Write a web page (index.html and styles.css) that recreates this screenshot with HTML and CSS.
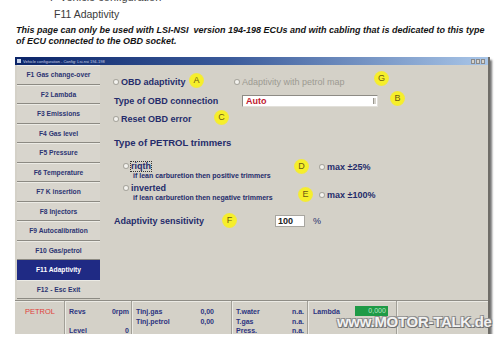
FILE: index.html
```html
<!DOCTYPE html>
<html lang="en">
<head>
    <meta charset="UTF-8">
    <meta name="viewport" content="width=device-width, initial-scale=1.0">
    <title>F11 Adaptivity</title>
    <link rel="stylesheet" href="styles.css">
</head>
<body>
    <div class="doc">
        <!-- Manual heading -->
        <p class="crumb">&bull;&nbsp; F Vehicle configuration</p>
        <p class="page-title">F11 Adaptivity</p>
        <p class="note">This page can only be used with LSI-NSI&nbsp; version 194-198 ECUs and with cabling that is dedicated to this type<br>of ECU connected to the OBD socket.</p>

        <!-- Screenshot of the configuration window -->
        <div class="window">
            <div class="titlebar">
                <span class="app-icon"></span>
                <span class="title-text">Vehicle configuration - Config: Lsi-nsi 194-198</span>
                <span class="win-btns"><i></i><i></i><i></i></span>
            </div>

            <div class="client">
                <ul class="menu">
                    <li>F1 Gas change-over</li>
                    <li>F2 Lambda</li>
                    <li>F3 Emissions</li>
                    <li>F4 Gas level</li>
                    <li>F5 Pressure</li>
                    <li>F6 Temperature</li>
                    <li>F7 K insertion</li>
                    <li>F8 Injectors</li>
                    <li>F9 Autocalibration</li>
                    <li>F10 Gas/petrol</li>
                    <li class="active">F11 Adaptivity</li>
                    <li>F12 - Esc Exit</li>
                </ul>

                <div class="panel">
                    <div class="row row-first">
                        <label class="option col-a"><span class="radio"></span>OBD adaptivity</label>
                        <label class="option disabled"><span class="radio"></span>Adaptivity with petrol map</label>
                    </div>
                    <div class="row row-select">
                        <span class="field-label col-a">Type of OBD connection</span>
                        <div class="select">Auto<span class="spin"></span></div>
                    </div>
                    <div class="row row-reset">
                        <label class="option"><span class="radio"></span>Reset OBD error</label>
                    </div>

                    <h3 class="section">Type of PETROL trimmers</h3>

                    <div class="trimmers">
                        <div class="trim-type">
                            <label class="option"><span class="radio"></span><span class="focus">riqth</span></label>
                            <p class="hint">if lean carburetion then positive trimmers</p>
                            <label class="option opt-inverted"><span class="radio"></span>inverted</label>
                            <p class="hint">if lean carburetion then negative trimmers</p>
                        </div>
                        <div class="trim-max">
                            <label class="option"><span class="radio"></span>max &plusmn;25%</label>
                            <label class="option opt-max100"><span class="radio"></span>max &plusmn;100%</label>
                        </div>
                    </div>

                    <div class="row row-sens">
                        <span class="field-label sens-label">Adaptivity sensitivity</span>
                        <span class="num-input">100</span>
                        <span class="unit">%</span>
                    </div>

                    <!-- Annotation markers -->
                    <span class="marker m-a">A</span>
                    <span class="marker m-g">G</span>
                    <span class="marker m-b">B</span>
                    <span class="marker m-c">C</span>
                    <span class="marker m-d">D</span>
                    <span class="marker m-e">E</span>
                    <span class="marker m-f">F</span>
                </div>
            </div>

            <div class="status">
                <div class="cell cell-fuel">PETROL</div>
                <div class="cell cell-revs">
                    <span>Revs</span><span class="val">0rpm</span>
                    <span>&nbsp;</span><span>&nbsp;</span>
                    <span>Level</span><span class="val">0</span>
                </div>
                <div class="cell cell-tinj">
                    <span>Tinj.gas</span><span class="val">0,00</span>
                    <span>Tinj.petrol</span><span class="val">0,00</span>
                </div>
                <div class="cell cell-temp">
                    <span>T.water</span><span class="val">n.a.</span>
                    <span>T.gas</span><span class="val">n.a.</span>
                    <span>Press.</span><span class="val">n.a.</span>
                </div>
                <div class="cell cell-lambda">
                    <span>Lambda</span><span class="lambda-bar">0,000</span>
                </div>
                <div class="cell cell-rest"></div>
            </div>
        </div>

        <div class="watermark">www.MOTOR-TALK.de</div>
    </div>
</body>
</html>
```

FILE: styles.css
```css
/* Colours of the scanned window */
:root {
    --win-bg: #d4d1c8;
    --btn-bg: #d8d5cd;
    --line-dark: #8c8a83;
    --line-light: #ecebe5;
    --navy: #252c6b;
    --menu-active: #1f2a84;
}

body {
    margin: 0;
    background: #ffffff;
    font-family: "Liberation Sans", Arial, sans-serif;
    overflow: hidden;
}

p, h3, ul {
    margin: 0;
    padding: 0;
}

.doc {
    position: relative;
    height: 343px;
}

/* Manual text above the screenshot (first line is cut by the scan) */
.crumb {
    margin-top: -9px;
    padding-left: 40px;
    font-size: 11px;
    line-height: 12px;
    color: #444;
}

.page-title {
    margin-top: 5px;
    padding-left: 54px;
    font-size: 10.5px;
    line-height: 12px;
    color: #3a3a3a;
}

.note {
    margin-top: 5px;
    padding-left: 16px;
    font-size: 9px;
    line-height: 11px;
    font-weight: bold;
    font-style: italic;
    color: #141414;
    white-space: nowrap;
}

/* Window */
.window {
    margin: 10px 0 0 15px;
    width: 473px;
    background: var(--win-bg);
    border-right: 2px solid #6f6d68;
    box-shadow: 2px 3px 2px rgba(0, 0, 0, 0.55);
}

.titlebar {
    height: 8px;
    display: flex;
    align-items: center;
    gap: 2px;
    padding: 0 3px 0 2px;
    background: linear-gradient(to right, #0b2468 0%, #3a5a9a 45%, #a9c6e8 100%);
}

.app-icon {
    width: 4px;
    height: 4px;
    background: #c8d4ea;
}

.title-text {
    font-size: 4px;
    color: #c9d3e8;
    white-space: nowrap;
}

.win-btns {
    margin-left: auto;
    display: flex;
    gap: 1px;
}

.win-btns i {
    width: 4px;
    height: 5px;
    background: #d6d3cc;
    border: 1px solid #8a8a8a;
    box-sizing: border-box;
}

.client {
    display: flex;
    height: 235px;
}

/* Function key menu */
.menu {
    list-style: none;
    width: 83px;
    padding-left: 2px;
}

.menu li {
    height: 19.5px;
    box-sizing: border-box;
    display: flex;
    align-items: center;
    justify-content: center;
    background: var(--btn-bg);
    border-top: 1px solid var(--line-light);
    border-bottom: 1px solid var(--line-dark);
    font-size: 6.7px;
    font-weight: bold;
    color: #2c3472;
    white-space: nowrap;
}

.menu li.active {
    background: var(--menu-active);
    border-color: var(--menu-active);
    color: #ffffff;
}

/* Main panel */
.panel {
    position: relative;
    flex: 1;
    padding: 11px 0 0 14px;
    color: var(--navy);
    font-size: 9px;
    font-weight: bold;
}

.row {
    display: flex;
    align-items: center;
    height: 12px;
}

.col-a {
    width: 121px;
}

.option {
    display: flex;
    align-items: center;
    height: 12px;
    white-space: nowrap;
}

.radio {
    width: 4px;
    height: 4px;
    margin-right: 3px;
    border-radius: 50%;
    background: #f4f3ef;
    box-shadow: 0 0 0 1px #a9a79f;
}

.disabled {
    color: #9c9a92;
    font-weight: normal;
}

.row-select {
    margin-top: 7px;
}

.row-select .col-a {
    width: 128px;
}

.select {
    position: relative;
    width: 136px;
    height: 12px;
    box-sizing: border-box;
    padding-left: 3px;
    line-height: 11px;
    background: #ffffff;
    border: 1px solid #8d8b85;
    border-right-color: #e2e0da;
    border-bottom-color: #e2e0da;
    color: #c0182e;
}

.spin {
    position: absolute;
    right: 1px;
    top: 2px;
    width: 2px;
    height: 6px;
    border-left: 1px solid #9a9890;
    background: #d6d3cc;
}

.row-reset {
    margin-top: 6px;
}

.section {
    margin-top: 12px;
    font-size: 9.5px;
    line-height: 12px;
}

/* Trimmer options in two columns */
.trimmers {
    display: flex;
    margin-top: 11px;
    padding-left: 10px;
}

.trim-type {
    width: 196px;
}

.hint {
    padding-left: 9px;
    font-size: 7px;
    line-height: 8px;
    white-space: nowrap;
}

.opt-inverted {
    margin-top: 2px;
}

.focus {
    outline: 1px dotted #333;
    outline-offset: 0;
    line-height: 9px;
}

.trim-max {
    padding-top: 1px;
}

.opt-max100 {
    margin-top: 16px;
}

.row-sens {
    margin-top: 13px;
}

.sens-label {
    width: 161px;
}

.num-input {
    width: 30px;
    height: 12px;
    box-sizing: border-box;
    padding-left: 2px;
    line-height: 11px;
    background: #ffffff;
    border: 1px solid #a8a6a0;
    color: #222;
}

.unit {
    margin-left: 8px;
    font-weight: normal;
}

/* Yellow annotation markers */
.marker {
    position: absolute;
    width: 15px;
    height: 15px;
    border-radius: 50%;
    background: radial-gradient(circle, #f6ef2a 55%, #efe64a 72%, rgba(240, 232, 90, 0) 100%);
    color: #6b5a12;
    font-size: 9px;
    font-weight: normal;
    line-height: 15px;
    text-align: center;
}

.m-a { left: 89px; top: 8px; }
.m-g { left: 274px; top: 6px; }
.m-b { left: 290px; top: 26px; }
.m-c { left: 114px; top: 45px; }
.m-d { left: 194px; top: 94px; }
.m-e { left: 198px; top: 122px; }
.m-f { left: 122px; top: 148px; }

/* Status bar */
.status {
    display: flex;
    height: 35px;
    border-top: 1px solid #8f8d86;
    box-shadow: inset 0 1px 0 var(--line-light);
    font-size: 7px;
    font-weight: bold;
    color: #2c3480;
}

.cell {
    box-sizing: border-box;
    padding-top: 6px;
    border-right: 1px solid #a19f97;
    box-shadow: 1px 0 0 var(--line-light);
    line-height: 9.5px;
}

.cell-fuel {
    width: 50px;
    padding-left: 10px;
    color: #e0403a;
    font-weight: normal;
    font-size: 7.5px;
}

.cell-revs,
.cell-tinj,
.cell-temp {
    display: grid;
    grid-template-columns: 1fr auto;
    align-content: start;
}

.cell-revs {
    width: 67px;
    padding: 6px 2px 0 4px;
}

.cell-tinj {
    width: 100px;
    padding: 6px 17px 0 4px;
}

.cell-temp {
    width: 76px;
    padding: 6px 3px 0 4px;
}

.val {
    text-align: right;
}

.cell-lambda {
    width: 89px;
    padding: 6px 0 0 5px;
    display: flex;
    align-items: flex-start;
}

.lambda-bar {
    margin-left: 15px;
    margin-top: -1px;
    width: 33px;
    height: 10px;
    padding-right: 2px;
    box-sizing: border-box;
    background: #1e9a46;
    color: #b9e6c3;
    font-weight: normal;
    text-align: right;
}

.cell-rest {
    flex: 1;
    border-right: none;
    box-shadow: none;
}

/* Forum watermark stamped on the scan */
.watermark {
    position: absolute;
    left: 337px;
    top: 324px;
    font-size: 15px;
    line-height: 14px;
    font-weight: bold;
    color: #f2f2f2;
    letter-spacing: -0.3px;
    text-shadow: 1px 1px 0 #6e6e6e, -1px -1px 0 #9a9a9a, 1px -1px 0 #8a8a8a, -1px 1px 0 #8a8a8a;
    white-space: nowrap;
}
```
